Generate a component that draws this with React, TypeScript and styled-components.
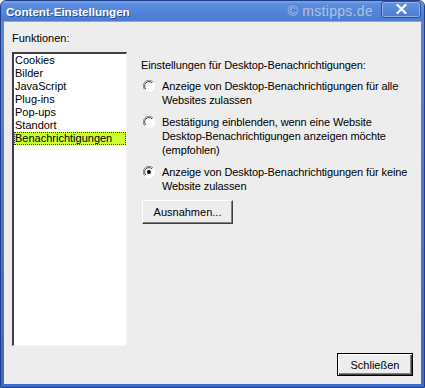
import React from "react";
import styled, { createGlobalStyle } from "styled-components";

const Global = createGlobalStyle`
  html, body { margin: 0; padding: 0; background: #ffffff; }
  body { font-family: Tahoma, "Liberation Sans", Arial, sans-serif; font-size: 11px; color: #000; }
`;

const Window = styled.div`
  width: 425px;
  height: 388px;
  box-sizing: border-box;
  background: linear-gradient(180deg, #6e9ce6 0px, #5587d8 22px, #3c6bc8 100%);
  border: 1px solid #1f3f8a;
  border-radius: 6px 6px 0 0;
  display: flex;
  flex-direction: column;
  overflow: hidden;
`;

const TitleBar = styled.div`
  height: 21px;
  display: flex;
  align-items: center;
  padding: 0 3px 0 5px;
  background: linear-gradient(180deg, #7aa6ec 0px, #5b8cdc 3px, #5283d6 60%, #4a7bd0 100%);
`;

const Title = styled.div`
  color: #ffffff;
  font-family: "Liberation Sans", Arial, sans-serif;
  font-weight: bold;
  font-size: 11.6px;
  flex: 1;
  text-shadow: 1px 1px 0 #2a4c99;
`;

const Watermark = styled.div`
  color: #adc1e4;
  font-family: "Liberation Sans", Arial, sans-serif;
  font-size: 14px;
  margin-right: 8px;
  letter-spacing: 0.3px;
`;

const CloseBtn = styled.div`
  width: 40px;
  height: 17px;
  box-sizing: border-box;
  border: 1px solid #2c4f9a;
  border-radius: 3px;
  box-shadow: inset 0 0 0 1px #8fb0e8;
  background: linear-gradient(180deg, #6394e0, #4a7bd2);
  display: flex;
  align-items: center;
  justify-content: center;
  margin-top: -4px;
`;

const Client = styled.div`
  flex: 1;
  margin: 0 3px 3px 3px;
  background: #ededed;
  border-top: 1px solid #9aa6bf;
  display: grid;
  grid-template-columns: 115px minmax(0, 1fr);
  grid-template-rows: 1fr auto;
  column-gap: 14px;
  padding: 8px 8px 8px 8px;
`;

const LeftCol = styled.div`
  display: flex;
  flex-direction: column;
`;

const Label = styled.div`
  line-height: 13px;
  margin: 2px 0 7px 0;
`;

const ListBox = styled.div`
  height: 294px;
  box-sizing: border-box;
  background: #ffffff;
  border-style: solid;
  border-width: 2px 1px 1px 2px;
  border-color: #404040 #f4f4f4 #f4f4f4 #404040;
`;

const ListItem = styled.div<{ $selected?: boolean }>`
  height: 13px;
  line-height: 13px;
  padding: 0 1px;
  white-space: nowrap;
  box-sizing: border-box;
  background: ${(p) => (p.$selected ? "#ccff33" : "transparent")};
  outline: ${(p) => (p.$selected ? "1px dotted #333" : "none")};
  outline-offset: -1px;
`;

const Panel = styled.div`
  padding-top: 28px;
  display: flex;
  flex-direction: column;
  font-size: 11px;
  letter-spacing: -0.1px;
`;

const Heading = styled.div`
  line-height: 14px;
  margin-bottom: 7px;
`;

const RadioRow = styled.label`
  display: flex;
  align-items: flex-start;
  gap: 7px;
  margin-bottom: 8px;
  padding-left: 2px;
`;

const RadioText = styled.div`
  line-height: 14px;
  white-space: nowrap;
`;

const Button = styled.div<{ $default?: boolean }>`
  box-sizing: border-box;
  display: inline-flex;
  align-items: center;
  justify-content: center;
  background: #ededed;
  font-size: 11px;
  letter-spacing: 0;
  border: 1px solid;
  border-color: ${(p) => (p.$default ? "#000" : "#ffffff #404040 #404040 #ffffff")};
  box-shadow: ${(p) =>
    p.$default
      ? "inset 1px 1px 0 #fff, inset -1px -1px 0 #404040, inset -2px -2px 0 #808080"
      : "inset -1px -1px 0 #808080"};
`;

const SmallButton = styled(Button)`
  width: 91px;
  height: 24px;
  margin-left: 1px;
  margin-top: -1px;
`;

const Footer = styled.div`
  grid-column: 1 / 3;
  display: flex;
  justify-content: flex-end;
  padding-top: 7px;
`;

const CloseButton = styled(Button)`
  width: 76px;
  height: 23px;
`;

const Radio = ({ checked }: { checked?: boolean }) => (
  <svg width="12" height="12" viewBox="0 0 12 12" style={{ marginTop: 1, flexShrink: 0 }}>
    <circle cx="6" cy="6" r="5.5" fill="#ffffff" />
    <path d="M10.2 2.2 A5.3 5.3 0 0 0 1.8 9.8" stroke="#808080" strokeWidth="1" fill="none" />
    <path d="M9.2 3 A4.2 4.2 0 0 0 2.8 9" stroke="#404040" strokeWidth="1" fill="none" />
    <path d="M1.8 9.8 A5.3 5.3 0 0 0 10.2 2.2" stroke="#ffffff" strokeWidth="1" fill="none" />
    {checked && <circle cx="6" cy="6" r="2" fill="#000" />}
  </svg>
);

const items = ["Cookies", "Bilder", "JavaScript", "Plug-ins", "Pop-ups", "Standort", "Benachrichtigungen"];

export default function App() {
  return (
    <>
      <Global />
      <Window>
        <TitleBar>
          <Title>Content-Einstellungen</Title>
          <Watermark>© mstipps.de</Watermark>
          <CloseBtn>
            <svg width="11" height="10" viewBox="0 0 11 10">
              <path d="M1.5 1 L9.5 9 M9.5 1 L1.5 9" stroke="#ffffff" strokeWidth="2.2" strokeLinecap="square" />
            </svg>
          </CloseBtn>
        </TitleBar>
        <Client>
          <LeftCol>
            <Label>Funktionen:</Label>
            <ListBox>
              {items.map((it) => (
                <ListItem key={it} $selected={it === "Benachrichtigungen"}>
                  {it}
                </ListItem>
              ))}
            </ListBox>
          </LeftCol>
          <Panel>
            <Heading>Einstellungen für Desktop-Benachrichtigungen:</Heading>
            <RadioRow>
              <Radio />
              <RadioText>
                Anzeige von Desktop-Benachrichtigungen für alle
                <br />
                Websites zulassen
              </RadioText>
            </RadioRow>
            <RadioRow>
              <Radio />
              <RadioText>
                Bestätigung einblenden, wenn eine Website
                <br />
                Desktop-Benachrichtigungen anzeigen möchte
                <br />
                (empfohlen)
              </RadioText>
            </RadioRow>
            <RadioRow>
              <Radio checked />
              <RadioText>
                Anzeige von Desktop-Benachrichtigungen für keine
                <br />
                Website zulassen
              </RadioText>
            </RadioRow>
            <div>
              <SmallButton>Ausnahmen...</SmallButton>
            </div>
          </Panel>
          <Footer>
            <CloseButton $default>Schließen</CloseButton>
          </Footer>
        </Client>
      </Window>
    </>
  );
}
